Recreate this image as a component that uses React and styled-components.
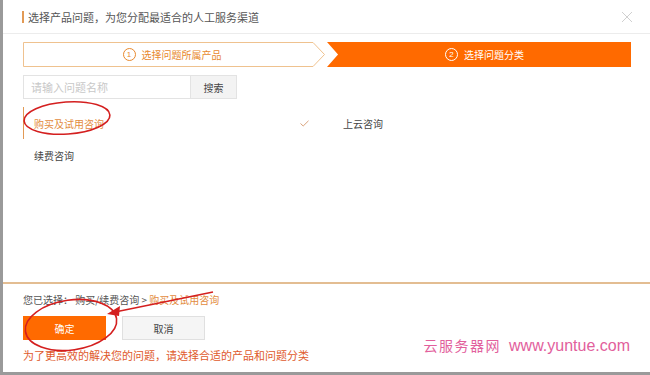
import React, { useState } from 'react';
import styled, { createGlobalStyle } from 'styled-components';

const GlobalStyle = createGlobalStyle`
  html, body {
    margin: 0;
    padding: 0;
    background: #9a9a9a;
  }
  body {
    font-family: "Noto Sans CJK SC", "Noto Sans", sans-serif;
    color: #444;
  }
`;

const Dialog = styled.div`
  position: relative;
  margin-left: 3px;
  width: 647px;
  height: 372px;
  background: #fff;
  display: flex;
  flex-direction: column;
  overflow: hidden;
`;

const Header = styled.div`
  height: 33px;
  border-bottom: 1px solid #ececec;
  padding: 0 17px 0 19px;
  display: flex;
  align-items: center;
  justify-content: space-between;
  flex-shrink: 0;
`;

const Title = styled.div`
  display: flex;
  align-items: center;
  font-size: 11px;
  line-height: 14px;
  color: #555;
  &::before {
    content: '';
    width: 2px;
    height: 12px;
    background: #e29a55;
    margin-right: 4px;
  }
`;

const Close = styled.button`
  border: none;
  background: none;
  padding: 0;
  width: 12px;
  height: 12px;
  cursor: pointer;
  display: flex;
`;

const Body = styled.div`
  flex: 1;
  padding: 8px 19px 0 20px;
`;

const Steps = styled.div`
  display: flex;
  height: 25px;
`;

const Step = styled.div`
  position: relative;
  flex: ${p => p.$grow};
  display: flex;
  align-items: center;
  justify-content: center;
  font-size: 10px;
  color: ${p => (p.$active ? '#fff' : '#e8892e')};
  svg {
    position: absolute;
    inset: 0;
    width: 100%;
    height: 100%;
  }
`;

const StepLabel = styled.span`
  position: relative;
  display: flex;
  align-items: center;
  gap: 6px;
  margin-left: ${p => p.$offset}px;
`;

const StepNum = styled.span`
  width: 11px;
  height: 11px;
  border-radius: 50%;
  border: 1px solid currentColor;
  font-size: 8px;
  line-height: 11px;
  text-align: center;
  font-family: "Liberation Sans", sans-serif;
`;

const SearchRow = styled.div`
  display: flex;
  margin-top: 8px;
  height: 24px;
`;

const SearchInput = styled.input`
  width: 167px;
  box-sizing: border-box;
  height: 24px;
  border: 1px solid #e3e3e3;
  border-right: none;
  padding: 0 7px;
  font-size: 11px;
  font-family: inherit;
  color: #333;
  outline: none;
  &::placeholder {
    color: #c8c8c8;
  }
`;

const SearchButton = styled.button`
  width: 47px;
  height: 24px;
  border: 1px solid #e3e3e3;
  background: #f3f3f3;
  font-size: 10px;
  font-family: inherit;
  color: #444;
  padding: 0;
`;

const List = styled.div`
  display: grid;
  grid-template-columns: 309px 1fr;
  margin-top: 8px;
`;

const Item = styled.div`
  height: 32px;
  display: flex;
  align-items: center;
  justify-content: space-between;
  padding: 0 23px 0 10px;
  font-size: 10px;
  cursor: pointer;
  border-left: 1px solid ${p => (p.$selected ? '#e29a55' : 'transparent')};
  color: ${p => (p.$selected ? '#e38c40' : '#444')};
`;

const Footer = styled.div`
  flex-shrink: 0;
  border-top: 2px solid #e3bd92;
  padding: 8px 23px 9px 20px;
  display: flex;
  flex-direction: column;
`;

const Chosen = styled.div`
  font-size: 10px;
  line-height: 15px;
  color: #555;
  span {
    color: #e38c40;
  }
`;

const Buttons = styled.div`
  display: flex;
  gap: 16px;
  margin-top: 9px;
`;

const Btn = styled.button`
  width: 83px;
  height: 24px;
  padding: 0;
  font-size: 10px;
  font-family: inherit;
  border: 1px solid ${p => (p.$primary ? '#ff6a00' : '#e0e0e0')};
  background: ${p => (p.$primary ? '#ff6a00' : '#f5f5f5')};
  color: ${p => (p.$primary ? '#fff' : '#444')};
`;

const Tip = styled.div`
  margin-top: 7px;
  font-size: 11px;
  line-height: 16px;
  color: #e05a2c;
`;

const Watermark = styled.div`
  position: absolute;
  right: 20px;
  bottom: 17px;
  display: flex;
  align-items: baseline;
  gap: 8px;
  color: #e2609c;
  font-size: 16px;
  font-family: "Liberation Sans", sans-serif;
  b {
    font-weight: normal;
    font-family: "Noto Sans CJK SC", serif;
    font-size: 14px;
    letter-spacing: 1.5px;
  }
`;

const Marks = styled.svg`
  position: absolute;
  left: 0;
  top: 0;
  width: 647px;
  height: 372px;
  pointer-events: none;
`;

const StepShape = ({ active }) =>
  active ? (
    <svg viewBox="0 0 304 25" preserveAspectRatio="none">
      <polygon points="1,0 304,0 304,25 1,25 12,12.5" fill="#ff6a00" />
    </svg>
  ) : (
    <svg viewBox="0 0 304 25" preserveAspectRatio="none">
      <polygon
        points="0.5,0.5 291,0.5 302.5,12.5 291,24.5 0.5,24.5"
        fill="#fff"
        stroke="#efc28f"
        strokeWidth="1"
      />
    </svg>
  );

const Check = () => (
  <svg width="9" height="7" viewBox="0 0 9 7">
    <path d="M0.5 3.5 L3.2 6 L8.5 0.8" fill="none" stroke="#d9a27a" strokeWidth="1" />
  </svg>
);

const items = [
  { name: '购买及试用咨询' },
  { name: '上云咨询' },
  { name: '续费咨询' },
];

const App = () => {
  const [selected, setSelected] = useState(0);

  return (
    <>
      <GlobalStyle />
      <Dialog>
        <Header>
          <Title>选择产品问题，为您分配最适合的人工服务渠道</Title>
          <Close aria-label="关闭">
            <svg width="12" height="12" viewBox="0 0 12 12">
              <path d="M1 1 L11 11 M11 1 L1 11" stroke="#d0d0d0" strokeWidth="1" />
            </svg>
          </Close>
        </Header>
        <Body>
          <Steps>
            <Step $grow="302">
              <StepShape />
              <StepLabel $offset={-5}>
                <StepNum>1</StepNum>选择问题所属产品
              </StepLabel>
            </Step>
            <Step $grow="304" $active>
              <StepShape active />
              <StepLabel $offset={12}>
                <StepNum>2</StepNum>选择问题分类
              </StepLabel>
            </Step>
          </Steps>
          <SearchRow>
            <SearchInput placeholder="请输入问题名称" />
            <SearchButton>搜索</SearchButton>
          </SearchRow>
          <List>
            {items.map((item, i) => (
              <Item key={i} $selected={selected === i} onClick={() => setSelected(i)}>
                {item.name}
                {selected === i && <Check />}
              </Item>
            ))}
          </List>
        </Body>
        <Footer>
          <Chosen>
            您已选择： 购买/续费咨询 &gt; <span>购买及试用咨询</span>
          </Chosen>
          <Buttons>
            <Btn $primary>确定</Btn>
            <Btn>取消</Btn>
          </Buttons>
          <Tip>为了更高效的解决您的问题，请选择合适的产品和问题分类</Tip>
        </Footer>
        <Watermark>
          <b>云服务器网</b>www.yuntue.com
        </Watermark>
        <Marks viewBox="0 0 647 372">
          <g fill="none" stroke="#d41f1f" strokeWidth="1.6">
            <ellipse cx="64" cy="118" rx="43" ry="16" transform="rotate(-4 64 118)" />
            <ellipse cx="68" cy="325" rx="46" ry="25" transform="rotate(-8 68 325)" />
            <path d="M210 292 L112 312" />
          </g>
          <polygon points="104,314 117,306 116,316" fill="#d41f1f" />
        </Marks>
      </Dialog>
    </>
  );
};

export default App;
